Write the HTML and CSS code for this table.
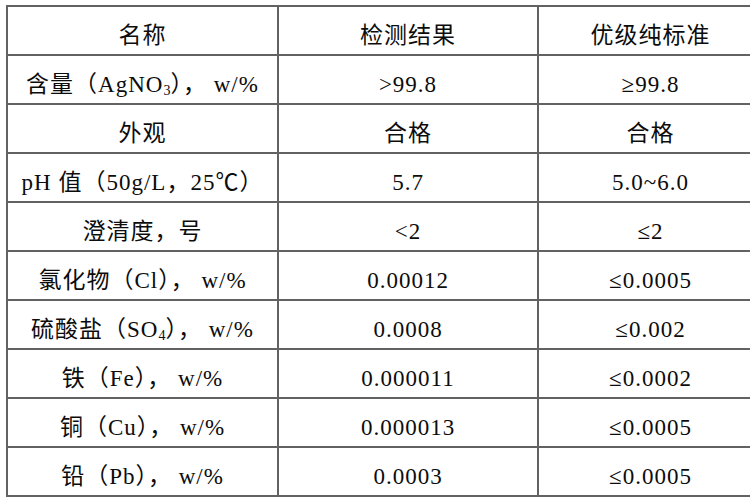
FILE: index.html
```html
<!DOCTYPE html>
<html lang="zh">
<head>
<meta charset="utf-8">
<title>硝酸银检测结果</title>
<link rel="stylesheet" href="styles.css">
</head>
<body>
<div class="page">
<table class="spec">
  <colgroup><col class="c1"><col class="c2"><col class="c3"></colgroup>
  <tr><td>名称</td><td>检测结果</td><td>优级纯标准</td></tr>
  <tr><td>含量（AgNO<sub>3</sub>）， w/%</td><td>&gt;99.8</td><td>≥99.8</td></tr>
  <tr><td>外观</td><td>合格</td><td>合格</td></tr>
  <tr><td>pH 值（50g/L，25℃）</td><td>5.7</td><td>5.0~6.0</td></tr>
  <tr><td>澄清度，号</td><td>&lt;2</td><td>≤2</td></tr>
  <tr><td>氯化物（Cl）， w/%</td><td>0.00012</td><td>≤0.0005</td></tr>
  <tr><td>硫酸盐（SO<sub>4</sub>）， w/%</td><td>0.0008</td><td>≤0.002</td></tr>
  <tr><td>铁（Fe）， w/%</td><td>0.000011</td><td>≤0.0002</td></tr>
  <tr><td>铜（Cu）， w/%</td><td>0.000013</td><td>≤0.0005</td></tr>
  <tr><td>铅（Pb）， w/%</td><td>0.0003</td><td>≤0.0005</td></tr>
</table>
</div>
</body>
</html>
```
FILE: styles.css
```css
html, body {
  margin: 0;
  padding: 0;
  background: #ffffff;
  width: 750px;
  height: 500px;
  overflow: hidden;
}
.page {
  padding: 5px 0 0 6px;
}
.spec {
  border-collapse: collapse;
  table-layout: fixed;
  width: 756px;
  font-family: "Liberation Serif", "Noto Sans CJK SC", serif;
  font-size: 23px;
  letter-spacing: 1px;
  color: #0c0c0c;
}
.c1 { width: 271px; }
.c2 { width: 260px; }
.c3 { width: 225px; }
.spec td {
  border: 2px solid #626262;
  height: 49px;
  box-sizing: border-box;
  padding: 11px 0 0 0;
  text-align: center;
  vertical-align: middle;
  white-space: nowrap;
  line-height: 26px;
}
.spec sub {
  font-size: 14px;
  vertical-align: -3px;
  line-height: 0;
  letter-spacing: 0;
}
```
